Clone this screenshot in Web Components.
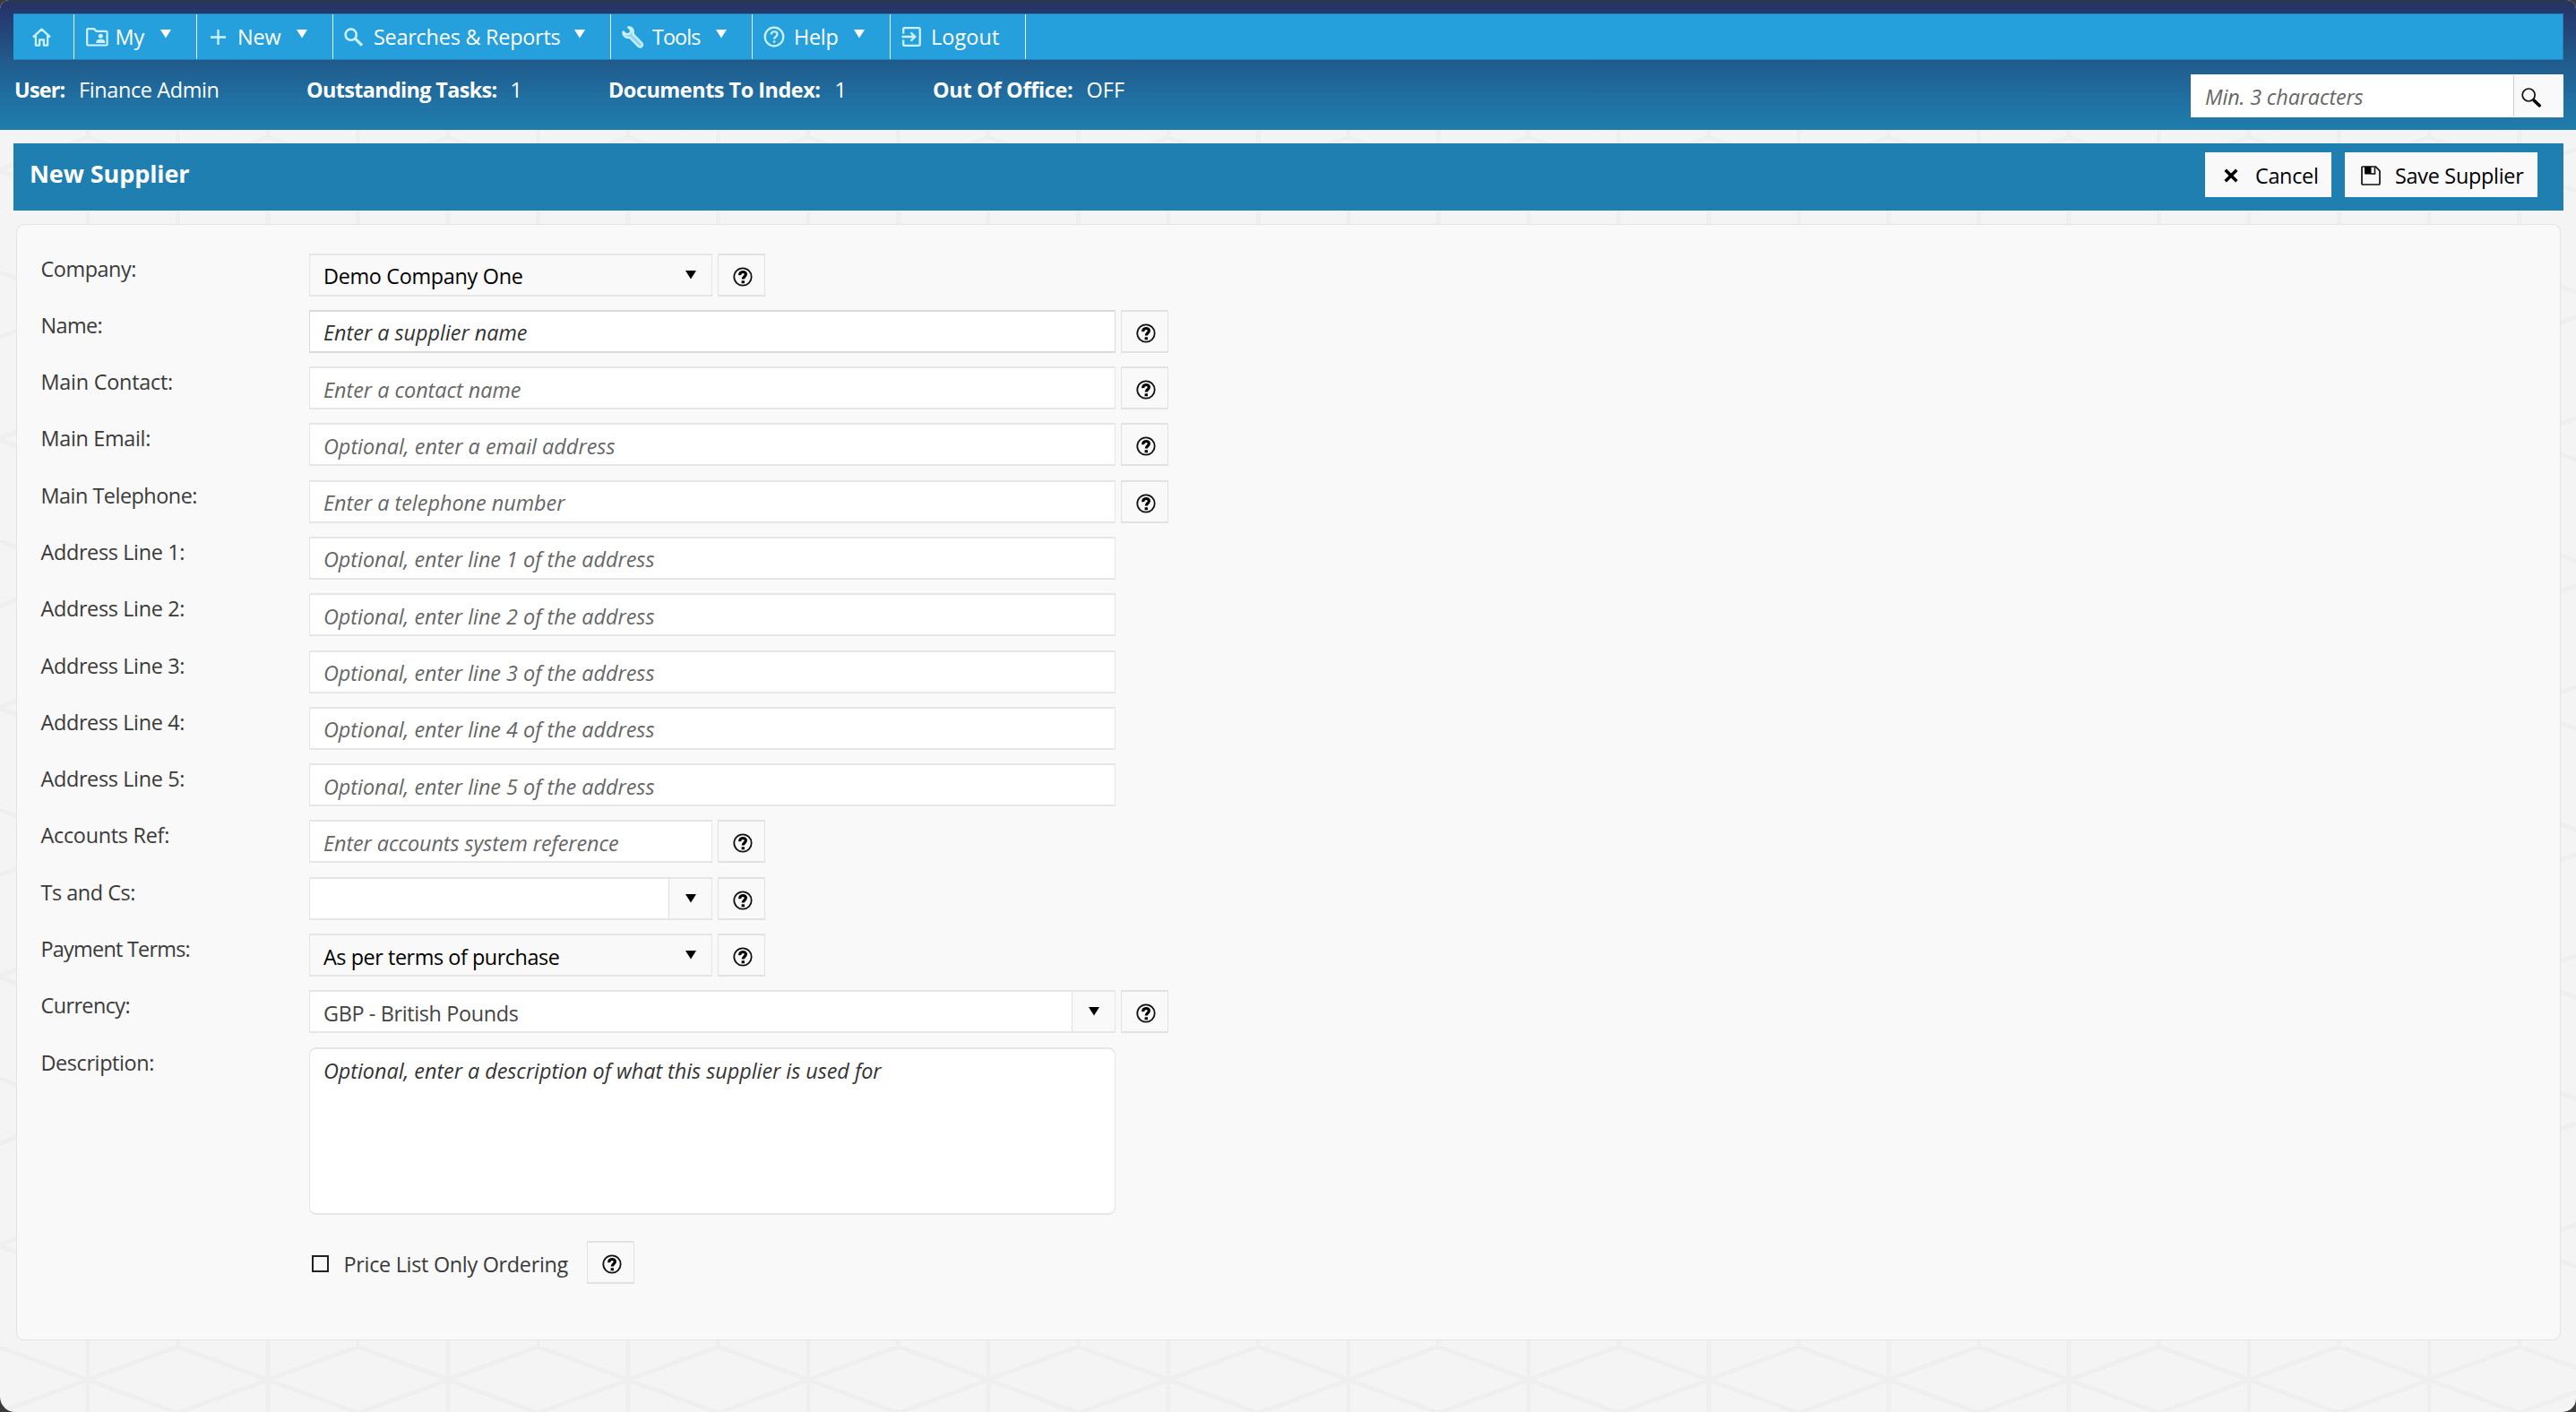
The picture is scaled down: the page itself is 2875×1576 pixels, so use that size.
<!DOCTYPE html>
<html lang="en">
<head>
<meta charset="utf-8">
<title>New Supplier</title>
<style>
html,body{margin:0;height:100%;background:#3a3b3d}
body{font:23.4px/32px "Open Sans","Noto Sans",sans-serif;color:#3a3a3a;overflow:hidden}
</style>
</head>
<body>
<app-shell>
  <app-header slot="header">
    <nav-bar>
      <nav-item w="68" pad="21" icon="home"></nav-item>
      <nav-item w="137" pad="12.5" icon="folder" gap="7" tw="34" agap="18">My</nav-item>
      <nav-item w="152" pad="15" icon="plus" gap="12" tw="50" agap="17">New</nav-item>
      <nav-item w="310" pad="12" icon="search" gap="10" tw="210" agap="15">Searches &amp; Reports</nav-item>
      <nav-item w="158" pad="12" icon="wrench" gap="8" tw="55" agap="17.5">Tools</nav-item>
      <nav-item w="154" pad="12" icon="help" gap="9" tw="51" agap="17">Help</nav-item>
      <nav-item w="151" pad="12" icon="logout" gap="9" tw="78">Logout</nav-item>
    </nav-bar>
    <status-bar></status-bar>
  </app-header>
  <title-bar></title-bar>
  <supplier-form></supplier-form>
</app-shell>

<script>
const ICONS={
home:[21,21,'<g fill="none" stroke="currentColor" stroke-width="2.3" stroke-linejoin="round"><path d="M1 10.4 10.5 1.6 20 10.4M3.900 9v10.600h4.200v-6.300h4.800v6.300h4.200V9"/></g>'],
folder:[25,21,'<g fill="none" stroke="currentColor" stroke-width="2.200"><path d="M1.200 18.300V2.200Q1.200 1.200 2.200 1.200H9l2.600 2.700h10.800q1.200 0 1.200 1.200v13.200q0 1.200-1.200 1.200h-20q-1.200 0-1.200-1.200z"/></g><circle cx="16.300" cy="9.300" r="2.500" fill="currentColor"/><path d="M11.400 17v-1.200q0-3 4.900-3t4.900 3V17z" fill="currentColor"/>'],
plus:[17,19,'<path d="M8.500 1v17M0 9.500h17" fill="none" stroke="currentColor" stroke-width="2.300"/>'],
search:[22,21,'<g fill="none" stroke="currentColor"><circle cx="7.700" cy="7.700" r="6.100" stroke-width="2.500"/><path d="m12.400 12.200 7.600 7.400" stroke-width="3.200"/></g>'],
wrench:[25,25,'<path d="M7.200 1.400 10 4.300v2.600L7.500 9.200H4.600L1.700 6.300C.6 9.700 3.700 14 8.600 12.800L18.200 22.500q2 2 4 .3 1.800-2-.2-4L12.500 9C13.800 4.600 11 .6 7.200 1.400z" fill="#8fd4f5" stroke="currentColor" stroke-width="2.200" stroke-linejoin="round"/>'],
help:[24,24,'<g fill="none" stroke="currentColor" stroke-width="2.200"><circle cx="12" cy="12" r="10.300"/><path d="M8.700 9.600c0-4.600 6.800-4.200 6.800-.3 0 2.500-3.400 2.700-3.400 5.500"/></g><circle cx="12.100" cy="17.600" r="1.300" fill="currentColor"/>'],
logout:[23,22,'<g fill="none" stroke="currentColor" stroke-width="2.300"><path d="M2.200 7.500V2.200Q2.200 1.200 3.200 1.200h16q1.500 0 1.500 1.500v16.600q0 1.500-1.500 1.500h-16q-1 0-1-1v-5.300M.5 11H15M10.500 6.300 15.300 11l-4.800 4.700"/></g>'],
hint:[22,22,'<circle cx="11" cy="11" r="9.700" fill="none" stroke="#111" stroke-width="1.800"/><path d="M7.700 9.100C7.600 4.400 14.400 4.500 14.400 8.100c0 2.600-3.100 2.800-3.100 5.400" fill="none" stroke="#000" stroke-width="3.200"/><rect x="9.600" y="15.200" width="3.400" height="3.100" rx=".5" fill="#000"/>'],
find:[22,22,'<circle cx="8.200" cy="8" r="7" fill="none" stroke="#111" stroke-width="1.700"/><path d="m13 12.800 1.700 1.700" stroke="#111" stroke-width="1.700"/><path d="m14.300 14.200 5.800 5.600" stroke="#000" stroke-width="3.600" stroke-linecap="round"/>'],
close:[16,16,'<path d="m1.700 1.700 12.600 12.600m0-12.600L1.700 14.300" fill="none" stroke="#000" stroke-width="3.500"/>'],
save:[22,22,'<path d="M2 1h14.500L21 5.800V20q0 1-1 1H2q-1 0-1-1V2q0-1 1-1z" fill="none" stroke="#111" stroke-width="1.700"/><path d="M4 1h7.500v8.400H5Q4 9.400 4 8.400z"/><path d="M11 9h4.500V1.500" fill="none" stroke="#111" stroke-width="1.600"/>'],
caret:[12,10,'<path d="M0 0h12L6 9.600z" fill="currentColor"/>']
};
const icon=n=>{const [w,h,b]=ICONS[n];return `<svg class="i-${n}" width="${w}" height="${h}" viewBox="0 0 ${w} ${h}">${b}</svg>`};
const BASE=`<style>*{box-sizing:border-box}:host{box-sizing:border-box}svg{display:block;flex:none}</style>`;
class Base extends HTMLElement{
  connectedCallback(){ if(!this.shadowRoot) this.attachShadow({mode:'open'}).innerHTML=BASE+this.render(); }
  a(n,d=''){return this.getAttribute(n)??d}
}

/* Page frame with the faint cube pattern behind the content. */
customElements.define('app-shell',class extends Base{render(){return `<style>
:host{display:flex;flex-direction:column;position:relative;width:2875px;height:1576px;border-radius:10px 10px 15px 17px;overflow:hidden;background:#f4f4f4;isolation:isolate}
.bg{position:absolute;inset:0;z-index:-1}
main{display:flex;flex-direction:column;padding:15px 14px 0 15px;gap:14.5px}</style>
<svg class="bg" width="2875" height="1576"><defs><pattern id="p" width="201" height="300" x="98" y="3" patternUnits="userSpaceOnUse">
<g fill="none" stroke="#efefef" stroke-width="5">
<path d="M0 37 100.5 0 201 37 100.5 74zM0 150 100.5 187 201 150M0 224 100.5 187 201 224"/>
<path d="M0 0V150M201 0V150M0 224V300M201 224V300M100.5 74V300"/></g></pattern></defs>
<rect width="2875" height="1576" fill="url(#p)"/></svg>
<slot name="header"></slot><main><slot></slot></main>`}});

customElements.define('app-header',class extends Base{render(){return `<style>
:host{display:flex;flex-direction:column;height:145px;padding:15px 14px 0 15px;color:#fff;background:linear-gradient(#2d3844 0,#273561 3px,#253569 10px,#253d72 22px,#215a8b 66px,#2070a2 112px,#1f7dad 145px)}
</style><slot></slot>`}});

customElements.define('nav-bar',class extends Base{render(){return `<style>
:host{display:flex;flex:none;height:52px;background:#26a0dc;border:1px solid #1b83ba;border-left:0}</style><slot></slot>`}});

customElements.define('nav-item',class extends Base{render(){const t=this.textContent.trim();return `<style>
:host{display:flex;align-items:center;flex:none;width:${this.a('w')}px;padding-left:${this.a('pad')}px;border-right:1.5px solid #e9fbff}
.ic{color:#cdf2ff}ui-text{margin-left:${this.a('gap',0)}px}.ar{margin:0 0 6px ${this.a('agap',0)}px}</style>
<span class="ic">${icon(this.a('icon'))}</span>${t?`<ui-text w="${this.a('tw')}"><slot></slot></ui-text>`:''}${this.hasAttribute('agap')?`<span class="ar">${icon('caret')}</span>`:''}`}});

customElements.define('status-bar',class extends Base{render(){
const s=(w,l,lw,g,v,vw)=>`<div style="width:${w}px"><b><ui-text w="${lw}">${l}</ui-text></b><ui-text w="${vw}" style="margin-left:${g}px">${v}</ui-text></div>`;
return `<style>:host{display:flex;justify-content:space-between}
.s{display:flex;padding-top:17px}.s div{display:flex;flex:none}
.q{display:flex;width:416px;height:48px;margin-top:15.5px;background:#fff;color:#666;font-style:italic;padding-left:15px;align-items:center}
.q span{margin-left:auto;display:flex;align-items:center;width:56px;height:46px;background:#f9f9f9;border-left:1.5px solid #ccc;padding:4px 0 0 8px}
.q ui-text{padding-top:2px}</style>
<div class="s">${s(326,'User:',58,14.5,'Finance Admin',158)}${s(337,'Outstanding Tasks:',214,14,'1',12)}${s(362,'Documents To Index:',238,15,'1',12)}${s(300,'Out Of Office:',158,14,'OFF',44)}</div>
<div class="q"><ui-text w="178">Min. 3 characters</ui-text><span>${icon('find')}</span></div>`}});

customElements.define('title-bar',class extends Base{render(){return `<style>
:host{display:flex;height:75px;background:#1f7fb0;padding:10px 29.5px 0 17px;gap:15px}
h1{margin:8px auto 0 0;font-size:27px;line-height:32px;color:#fff}
button{display:flex;align-items:center;font:inherit;color:#000;background:#f9f9f9;border:0;height:50px;padding:2px 0 0}
.c{width:141px;padding-left:21px}.c ui-text{margin-left:18px}.s{width:214.5px;padding-left:18px}.s ui-text{margin-left:15px}</style>
<h1><ui-text w="180">New Supplier</ui-text></h1>
<button class="c">${icon('close')}<ui-text w="72">Cancel</ui-text></button>
<button class="s">${icon('save')}<ui-text w="145">Save Supplier</ui-text></button>`}});

customElements.define('help-button',class extends Base{render(){return `<style>
:host{display:flex;flex:none;width:53px;height:48px;padding:4px 0 0 3px;align-items:center;justify-content:center;background:#f9f9f9;border:1.5px solid #e2e2e2;border-width:2px 1px}</style>${icon('hint')}`}});

/* One labelled line of the form; kind is text, select or combo. */
customElements.define('form-row',class extends Base{render(){
const kind=this.a('kind','text'),wide=this.hasAttribute('wide'),W=wide?900:450,col=this.a('tone','#666'),tw=this.a('tw');
return `<style>:host{display:flex;height:63.3px;flex:none}
.l{width:300.5px;padding-top:1px;flex:none}
.f{display:flex;align-items:center;width:${W}px;height:48px;padding-left:14px;margin-right:6px;background:${kind=='select'?'#f9f9f9':'#fff'};border:solid ${this.hasAttribute('strong')?'#dadada':'#e6e6e6'};border-width:2px 1px;color:${col};font-style:${kind=='text'?'italic':'normal'}}
.f ui-text{padding-top:3px}
.d{margin-left:auto;display:flex;width:48px;height:100%;align-items:flex-start;padding:17px 0 0 18px;color:#000;border-left:1.5px solid ${kind=='combo'?'#e0e0e0':'transparent'};background:#f9f9f9}</style>
<div class="l"><ui-text w="${this.a('lw')}">${this.a('label')}</ui-text></div>
<div class="f">${tw?`<ui-text w="${tw}"><slot></slot></ui-text>`:''}${kind!='text'?`<span class="d">${icon('caret')}</span>`:''}</div>
${this.hasAttribute('help')?'<help-button></help-button>':''}`}});

customElements.define('supplier-form',class extends Base{render(){
const addr=[1,2,3,4,5].map(n=>`<form-row label="Address Line ${n}:" lw="162" wide tw="371">Optional, enter line ${n} of the address</form-row>`).join('');
return `<style>:host{display:flex;flex-direction:column;height:1246.5px;margin:0 3px 0 3px;padding:32px 0 0 25.5px;background:#f9f9f9;border:1.5px solid #e4e4e4;border-radius:9px}
.row{display:flex}.l{width:300.5px;padding-top:1px}
.t{width:900px;height:187px;border:solid #e6e6e6;border-width:2px 1px;border-radius:8px;background:#fff;font-style:italic;color:#333;padding:8px 14px}
.c{display:flex;align-items:center;margin:29.5px 0 0 303px}
.c i{width:19px;height:19px;border:2px solid #222;margin:3px 16px 0 0}.c ui-text{margin-right:21px;padding-top:4px}</style>
<form-row label="Company:" lw="108" kind="select" tw="224" tone="#000" help>Demo Company One</form-row>
<form-row label="Name:" lw="70" wide strong tw="229" tone="#333" help>Enter a supplier name</form-row>
<form-row label="Main Contact:" lw="149" wide tw="222" help>Enter a contact name</form-row>
<form-row label="Main Email:" lw="124" wide tw="327" help>Optional, enter a email address</form-row>
<form-row label="Main Telephone:" lw="176" wide tw="271" help>Enter a telephone number</form-row>
${addr}
<form-row label="Accounts Ref:" lw="145" tw="331" help>Enter accounts system reference</form-row>
<form-row label="Ts and Cs:" lw="107" kind="combo" help></form-row>
<form-row label="Payment Terms:" lw="168" kind="select" tw="265" tone="#000" help>As per terms of purchase</form-row>
<form-row label="Currency:" lw="101" kind="combo" wide tw="219" tone="#444" help>GBP - British Pounds</form-row>
<div class="row"><div class="l"><ui-text w="128">Description:</ui-text></div><div class="t"><ui-text w="624">Optional, enter a description of what this supplier is used for</ui-text></div></div>
<div class="c"><i></i><ui-text w="252">Price List Only Ordering</ui-text><help-button></help-button></div>`}});

/* Text tracked so that it fills the given width, 1px of side bearing included. */
customElements.define('ui-text',class extends HTMLElement{connectedCallback(){
  if(this.shadowRoot)return;
  this.attachShadow({mode:'open'}).innerHTML='<style>:host{display:inline-block;white-space:pre;flex:none;padding-left:1px}</style><slot></slot>';
  const w=+this.getAttribute('w')-.5,nat=this.getBoundingClientRect().width;
  const s=this.querySelector('slot'),t=(s?s.assignedNodes().map(n=>n.textContent).join(''):this.textContent);
  if(w&&t.length>1)this.style.letterSpacing=((w-nat)/t.length)+'px';
}});
</script>
</body>
</html>
